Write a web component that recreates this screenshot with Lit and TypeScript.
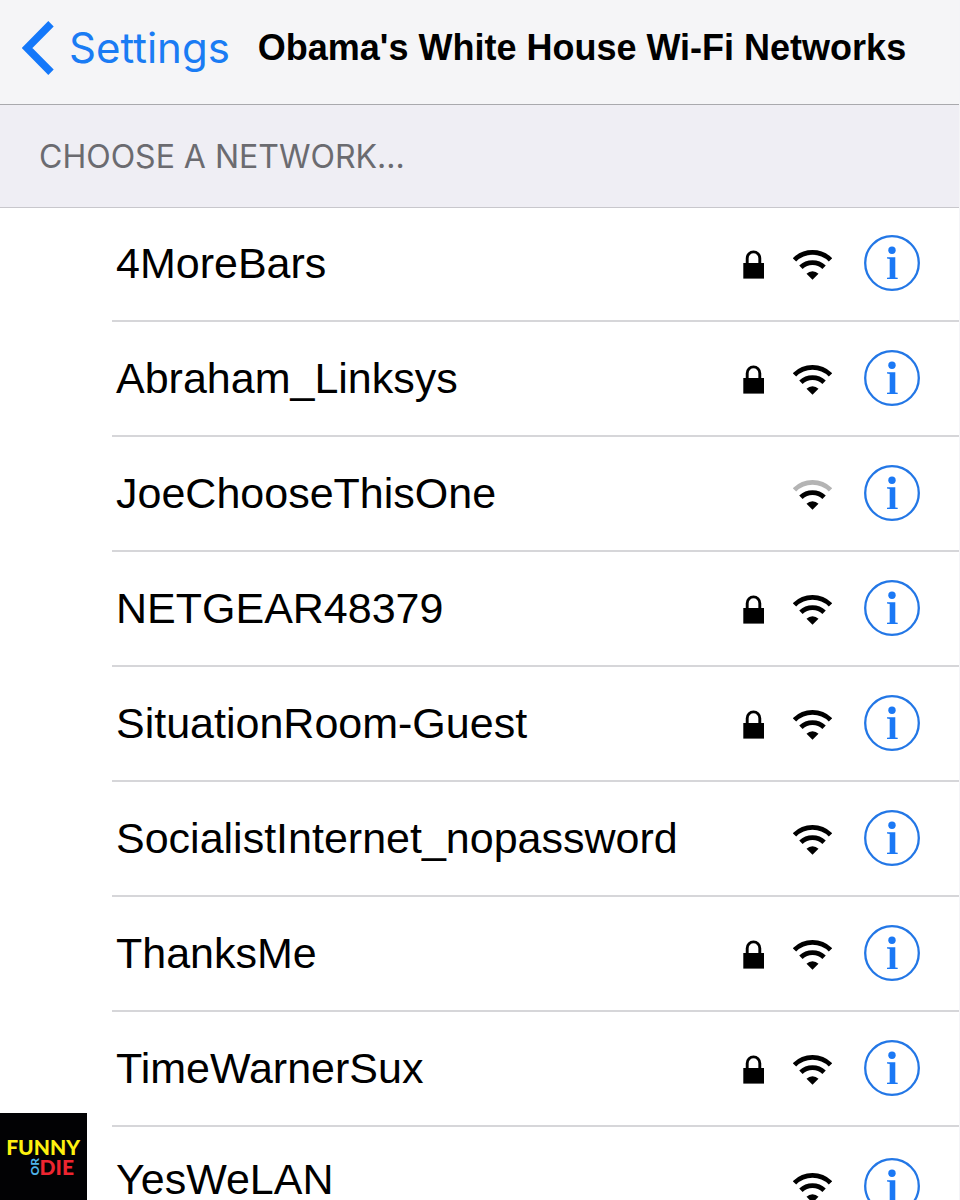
import { LitElement, html, css, nothing } from "lit";
import { customElement, property } from "lit/decorators.js";

interface Network {
  name: string;
  locked: boolean;
  weak?: boolean;
}

const NETWORKS: Network[] = [
  { name: "4MoreBars", locked: true },
  { name: "Abraham_Linksys", locked: true },
  { name: "JoeChooseThisOne", locked: false, weak: true },
  { name: "NETGEAR48379", locked: true },
  { name: "SituationRoom-Guest", locked: true },
  { name: "SocialistInternet_nopassword", locked: false },
  { name: "ThanksMe", locked: true },
  { name: "TimeWarnerSux", locked: true },
  { name: "YesWeLAN", locked: false },
];

@customElement("network-row")
export class NetworkRow extends LitElement {
  @property() name = "";
  @property({ type: Boolean }) locked = false;
  @property({ type: Boolean }) weak = false;

  static styles = css`
    :host {
      display: flex;
      align-items: center;
      box-sizing: border-box;
      min-height: 115px;
      margin-left: 112px;
      padding: 0 39px 2px 4px;
      border-bottom: 2px solid #d6d6d9;
      color: #000;
    }
    :host(:first-of-type) {
      min-height: 114px;
    }
    :host(:last-of-type) {
      min-height: 122px;
    }
    :host(:last-of-type) .name {
      align-self: flex-start;
      margin-top: 28px;
    }
    button {
      margin: 0;
      padding: 0;
      border: 0;
      background: none;
      color: inherit;
      cursor: pointer;
    }
    .name {
      flex: 1;
      min-width: 0;
      text-align: left;
      font: 43px/48px "Liberation Sans", Arial, sans-serif;
    }
    svg {
      display: block;
      flex: none;
    }
    .lock {
      margin-right: 29px;
    }
    .wifi {
      margin-right: 32px;
    }
    .faint {
      stroke: #b4b4b4;
    }
    .info {
      flex: none;
      border-radius: 50%;
    }
  `;

  render() {
    return html`
      <button class="name">${this.name}</button>
      ${this.locked
        ? html`<svg class="lock" width="21" height="32" viewBox="0 0 21 32" role="img" aria-label="Secured">
            <path d="M4.2 17V11.2a6.3 6.3 0 0 1 12.6 0V17" fill="none" stroke="#000" stroke-width="2.9" />
            <rect x="0.3" y="16" width="20.7" height="15.6" />
          </svg>`
        : nothing}
      <svg class="wifi" width="39" height="34" viewBox="0 -1 39 34" role="img" aria-label="Signal strength">
        <g fill="none" stroke="#000" stroke-width="4.8">
          <path class=${this.weak ? "faint" : ""} d="M1.5 12.9A25.5 25.5 0 0 1 37.5 12.9" />
          <path d="M7.9 20.3A16.6 16.6 0 0 1 31.1 20.3" />
        </g>
        <path d="M13.5 26.8a8.4 8.4 0 0 1 12 0L19.5 32.8Z" />
      </svg>
      <button class="info" aria-label="More info">
        <svg width="56" height="56" viewBox="0 0 56 56">
          <circle cx="28" cy="28" r="26.8" fill="none" stroke="#2377e6" stroke-width="2.3" />
          <circle cx="28" cy="15.2" r="3.7" fill="#1a78f5" />
          <path d="M23 22.3H31.3V42.4L33.7 42.8V43.9H23V42.8L25.7 42.4V23.9L23 23.4Z" fill="#1a78f5" />
        </svg>
      </button>
    `;
  }
}

@customElement("app-root")
export class AppRoot extends LitElement {
  static styles = css`
    :host {
      display: block;
      position: relative;
      box-sizing: border-box;
      height: 100vh;
      overflow: hidden;
      border-right: 1px solid #f4f4f7;
      background: #fff;
    }
    .bar {
      display: flex;
      align-items: center;
      box-sizing: border-box;
      min-height: 105px;
      padding: 0 22px 8px;
      border-bottom: 1px solid #a9a9ad;
      background: #f5f5f7;
    }
    .back {
      display: flex;
      align-items: center;
      gap: 15px;
      margin-right: 28px;
      color: #1a7cf4;
      font: 42px/48px Inter, sans-serif;
      text-decoration: none;
    }
    .chevron {
      display: block;
    }
    .title {
      margin: 0;
      font: bold 36px/48px "Liberation Sans", Arial, sans-serif;
      color: #000;
      white-space: nowrap;
    }
    .section {
      display: flex;
      align-items: center;
      box-sizing: border-box;
      min-height: 103px;
      margin: 0;
      padding: 2px 39px 0;
      border-bottom: 1px solid #c8c7cc;
      background: #efeef4;
      color: #6b6b70;
      font: 32px/40px Inter, sans-serif;
    }
    .logo {
      position: absolute;
      left: 0;
      bottom: 0;
      display: flex;
      flex-direction: column;
      justify-content: center;
      align-items: flex-end;
      box-sizing: border-box;
      width: 87px;
      height: 87px;
      padding-right: 7px;
      background: #020204;
      font: 900 21px/20px Lato, sans-serif;
    }
    .funny {
      color: #fdf00f;
    }
    .second {
      display: flex;
      align-items: center;
      padding-right: 6px;
      color: #ee2530;
    }
    .or {
      writing-mode: vertical-rl;
      transform: rotate(180deg);
      color: #4fb4ea;
      font-size: 12px;
      line-height: 10px;
    }
  `;

  render() {
    return html`
      <header class="bar">
        <a class="back" href="#settings">
          <svg class="chevron" width="32" height="54" viewBox="0 0 32 54" aria-hidden="true">
            <path d="M29 2.8L5 27L29 51.2" fill="none" stroke="#1478fa" stroke-width="7.6" />
          </svg>
          <span>Settings</span>
        </a>
        <h1 class="title">Obama's White House Wi-Fi Networks</h1>
      </header>
      <h2 class="section">CHOOSE A NETWORK...</h2>
      <main>
        ${NETWORKS.map(
          (n) => html`<network-row .name=${n.name} .locked=${n.locked} .weak=${!!n.weak}></network-row>`
        )}
      </main>
      <div class="logo">
        <span class="funny">FUNNY</span>
        <span class="second"><span class="or">OR</span><span>DIE</span></span>
      </div>
    `;
  }
}
